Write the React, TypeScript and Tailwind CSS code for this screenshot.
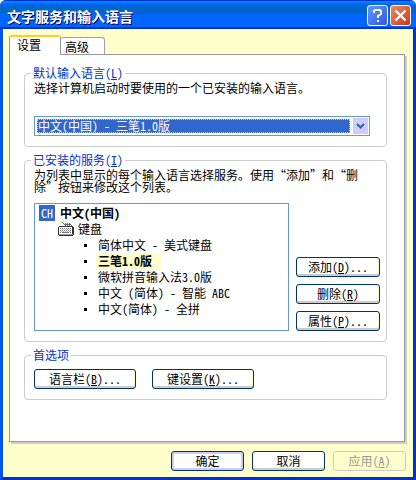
import { useState, type ReactNode } from "react";
import clsx from "clsx";

const LAYOUTS = [
    { id: "us", name: "简体中文 - 美式键盘" },
    { id: "sanbi", name: "三笔1.0版" },
    { id: "mspy", name: "微软拼音输入法3.0版" },
    { id: "abc", name: "中文 (简体) - 智能 ABC" },
    { id: "quanpin", name: "中文(简体) - 全拼" },
];

type ButtonProps = {
    children: ReactNode;
    hotkey?: string;
    more?: boolean;
    primary?: boolean;
    disabled?: boolean;
    className?: string;
};

function Button({ children, hotkey, more, primary, disabled, className }: ButtonProps) {
    return (
        <button
            type="button"
            disabled={disabled}
            className={clsx(
                "h-5 rounded-[3px] border text-center leading-4 whitespace-nowrap",
                disabled
                    ? "border-[#cccccc] text-[#999999]"
                    : "border-[#003366] bg-white",
                !disabled && !primary && "shadow-[inset_0_-2px_#cccccc,inset_-1px_0_#ffffcc]",
                primary && "shadow-[inset_0_0_0_2px_#ccccff,inset_0_-2px_#9999ff]",
                className
            )}
        >
            {children}
            {hotkey && <Hotkey letter={hotkey} />}
            {more && "..."}
        </button>
    );
}

function Hotkey({ letter }: { letter: string }) {
    return (
        <>
            (<u>{letter}</u>)
        </>
    );
}

function Group({ title, hotkey, children }: { title: string; hotkey?: string; children: ReactNode }) {
    return (
        <fieldset className="min-w-0 rounded-[4px] border border-[#cccccc] px-[9px]">
            <legend className="-ml-[3px] px-[2px] leading-3 text-[#0033cc]">
                {title}
                {hotkey && <Hotkey letter={hotkey} />}
            </legend>
            {children}
        </fieldset>
    );
}

function KeyboardIcon() {
    return (
        <svg width="16" height="16" viewBox="0 0 16 16" shapeRendering="crispEdges" aria-hidden="true">
            <path d="M4 1h1v1h1v1h1v-1h1v1h1v-1h1v1h1v-1h1v1h1v1h1v1h-1v-1h-1v1h-1v-1h-1v1h-1v-1h-1v1h-1v-1h-1v-1h-1z" fill="#666666" />
            <path d="M1 5h14v1h1v8h-1v1H1v-1H0V6h1z" fill="#333333" />
            <path d="M1 6h13v7H1z" fill="#ffffff" />
            <path d="M2 7.5h12M2 9.5h12M2 11.5h12" stroke="#777777" strokeDasharray="1 1" />
            <path d="M3 8.5h10M3 10.5h10" stroke="#aaaaaa" strokeDasharray="1 1" />
            <path d="M4 11h7v1H4z" fill="#777777" />
            <path d="M1 13h14v1H1z" fill="#999999" />
        </svg>
    );
}

export default function App() {
    const [selected, setSelected] = useState("sanbi");

    return (
        <div
            lang="zh-CN"
            className="flex min-h-screen w-full flex-col rounded-t-[6px] border-x-[3px] border-b-[3px] border-[#0033cc] border-l-[#0055ee] bg-[#ffffcc] font-['Noto_Sans_CJK_SC',sans-serif] text-[12px] leading-3 text-black [font-feature-settings:'hwid']"
        >
            <header className="-mx-[3px] flex h-[29px] items-center gap-[2px] rounded-t-[6px] bg-[linear-gradient(#0033cc_0_1px,#0080ff_1px_3px,#0066ff_3px_5px,#0066cc_5px_14px,#0066ff_14px_27px,#0033cc_27px)] pt-[2px] pr-[5px] pl-[7px]">
                <h1 className="flex-1 text-[14px] leading-5 font-bold text-white [text-shadow:1px_1px_#000066]">
                    文字服务和输入语言
                </h1>
                <button type="button" aria-label="帮助" className="size-[21px] rounded-[3px] border border-white bg-linear-to-br from-[#6699ff] to-[#3355dd]">
                    <svg viewBox="0 0 19 19" fill="none" stroke="#ffffff" strokeWidth="2" aria-hidden="true">
                        <path d="M6 7V5L7 4H12L13 5V8L10 10V12M10 14V16" />
                    </svg>
                </button>
                <button type="button" aria-label="关闭" className="size-[21px] rounded-[3px] border border-white bg-linear-to-br from-[#ee8866] to-[#cc3300]">
                    <svg viewBox="0 0 19 19" fill="none" stroke="#ffffff" strokeWidth="2.4" aria-hidden="true">
                        <path d="M4.5 4.5L14.5 14.5M14.5 4.5L4.5 14.5" />
                    </svg>
                </button>
            </header>

            <main className="flex flex-1 flex-col px-[6px] pt-[6px]">
                <div role="tablist" className="flex items-end">
                    <button
                        type="button"
                        role="tab"
                        aria-selected="true"
                        className="z-10 -mb-px h-5 w-[52px] rounded-t-[3px] border-x border-t-2 border-x-[#999999] border-t-[#ffcc33] bg-white pb-[2px] pl-[7px] text-left leading-3"
                    >
                        设置
                    </button>
                    <button
                        type="button"
                        role="tab"
                        aria-selected="false"
                        className="h-[17px] w-11 rounded-t-[3px] border-t border-r border-[#9999cc] bg-white pt-[2px] pl-1 text-left leading-3"
                    >
                        高级
                    </button>
                </div>

                <section
                    role="tabpanel"
                    className="mr-[2px] flex flex-1 flex-col gap-[7px] border border-[#999999] bg-white pt-3 pr-[17px] pb-10 pl-[14px] shadow-[2px_2px_#cccccc]"
                >
                    <Group title="默认输入语言" hotkey="L">
                        <label htmlFor="language" className="mt-[3px] block">
                            选择计算机启动时要使用的一个已安装的输入语言。
                        </label>
                        <div className="mt-[22px] mr-[7px] mb-[10px] grid h-5 border border-[#6699cc] p-[2px]">
                            <select
                                id="language"
                                className="col-start-1 row-start-1 mr-[17px] h-[14px] appearance-none border border-dotted border-[#ffcc66] bg-[#3366cc] leading-3 text-white"
                            >
                                <option>中文(中国) - 三笔1.0版</option>
                            </select>
                            <span className="pointer-events-none col-start-1 row-start-1 -my-px -mr-px flex h-4 w-[15px] items-center justify-center justify-self-end bg-[#ccccff]">
                                <svg width="9" height="6" viewBox="0 0 9 6" fill="none" stroke="#336699" strokeWidth="2" aria-hidden="true">
                                    <path d="M1 1L4.5 4.5L8 1" />
                                </svg>
                            </span>
                        </div>
                    </Group>

                    <Group title="已安装的服务" hotkey="I">
                        <p className="mt-[3px]">
                            为列表中显示的每个输入语言选择服务。使用“添加”和“删除”按钮来修改这个列表。
                        </p>
                        <div className="mt-[10px] mb-[10px] flex items-end gap-[7px]">
                            <div className="h-32 min-w-0 flex-1 border border-[#6699cc] pt-px pl-1 leading-4 whitespace-nowrap">
                                <div className="flex gap-[5px] font-bold">
                                    <span className="size-4 bg-[#3366cc] text-center font-normal text-white">CH</span>
                                    中文(中国)
                                </div>
                                <div className="flex gap-1 pl-[19px]">
                                    <KeyboardIcon />
                                    键盘
                                </div>
                                <ul className="pl-[45px]">
                                    {LAYOUTS.map((layout) => (
                                        <li key={layout.id} className="flex items-center gap-[9px]">
                                            <span className="size-[3px] bg-black" />
                                            <button
                                                type="button"
                                                onClick={() => setSelected(layout.id)}
                                                className={clsx(
                                                    "h-4 pl-[2px]",
                                                    layout.id === selected && "bg-[#ffffcc] pr-[10px] font-bold"
                                                )}
                                            >
                                                {layout.name}
                                            </button>
                                        </li>
                                    ))}
                                </ul>
                            </div>
                            <div className="-mr-[3px] flex w-[84px] flex-col gap-[7px]">
                                <Button hotkey="D" more>添加</Button>
                                <Button hotkey="R">删除</Button>
                                <Button hotkey="P" more>属性</Button>
                            </div>
                        </div>
                    </Group>

                    <Group title="首选项">
                        <div className="mt-2 mb-[10px] flex gap-4">
                            <Button hotkey="B" more className="w-[102px]">语言栏</Button>
                            <Button hotkey="K" more className="w-[102px]">键设置</Button>
                        </div>
                    </Group>
                </section>

                <footer className="flex justify-end gap-2 pt-[9px] pr-px pb-[6px]">
                    <Button primary className="w-[73px]">确定</Button>
                    <Button className="w-[73px]">取消</Button>
                    <Button hotkey="A" disabled className="w-[73px]">应用</Button>
                </footer>
            </main>
        </div>
    );
}
